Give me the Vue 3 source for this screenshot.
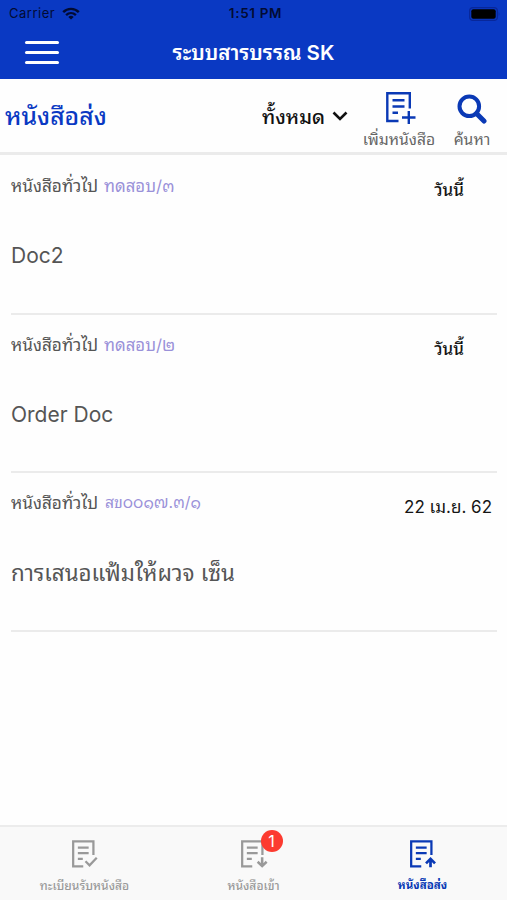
<template>
  <div class="screen">
    <header class="app-header">
      <div class="status-bar">
        <div class="carrier">
          <span class="carrier-name">Carrier</span>
          <svg class="wifi" viewBox="0 0 18 13" fill="none" stroke="#020b33" stroke-width="2.4">
            <path d="M1.2 5.2C5.6 .8 12.4 .8 16.8 5.2" />
            <path d="M4.1 8.1C7 5.4 11 5.4 13.9 8.1" />
            <path d="M6.3 9.9Q9 7.8 11.7 9.9L9 12.6Z" fill="#020b33" stroke="none" />
          </svg>
        </div>
        <span class="clock">1:51 PM</span>
        <svg class="battery" viewBox="0 0 32 14">
          <rect x=".6" y=".6" width="27.8" height="12.8" rx="3.5" fill="none" stroke="#08279a" stroke-width="1.2" />
          <rect x="2.3" y="2.3" width="24.4" height="9.4" rx="2" fill="#000" />
          <path d="M29.7 4.8Q31.3 7 29.7 9.2Z" fill="#08279a" />
        </svg>
      </div>
      <div class="nav-bar">
        <button class="menu-button"><i></i><i></i><i></i></button>
        <h1 class="app-title">ระบบสารบรรณ SK</h1>
      </div>
    </header>

    <div class="toolbar">
      <h2 class="page-title">หนังสือส่ง</h2>
      <button class="filter">
        <span class="filter-label">ทั้งหมด</span>
        <svg class="chevron" viewBox="0 0 16 10" fill="none" stroke="#111" stroke-width="2.6">
          <path d="M1.5 1.5L8 8L14.5 1.5" />
        </svg>
      </button>
      <button class="action add">
        <svg class="doc-icon" viewBox="0 0 30 33" fill="none" stroke="currentColor" stroke-width="2.4">
          <path :d="docPath" />
          <path d="M16 25.5H29.5M22.8 19V32" />
        </svg>
        <span>เพิ่มหนังสือ</span>
      </button>
      <button class="action search">
        <svg class="search-icon" viewBox="0 0 30 30" fill="none" stroke="currentColor">
          <circle cx="12.3" cy="12.3" r="9.8" stroke-width="4" />
          <path d="M19.5 19.5L27 27" stroke-width="5" stroke-linecap="round" />
        </svg>
        <span>ค้นหา</span>
      </button>
    </div>

    <main class="doc-list">
      <article v-for="doc in docs" :key="doc.number" class="doc-row">
        <div class="doc-meta">
          <span class="doc-type">{{ doc.type }}</span>
          <span :class="['doc-number', { long: doc.thai }]">{{ doc.number }}</span>
          <span :class="['doc-date', { today: doc.today }]">{{ doc.date }}</span>
        </div>
        <p :class="['doc-title', { thai: doc.thai }]">{{ doc.title }}</p>
      </article>
    </main>

    <nav class="tab-bar">
      <button v-for="tab in tabs" :key="tab.id" :class="['tab-item', tab.id, { active: activeTab === tab.id }]" @click="activeTab = tab.id">
        <span class="tab-icon">
          <svg class="doc-icon" viewBox="0 0 30 33" fill="none" stroke="currentColor" stroke-width="2.5">
            <path :d="docPath" />
            <path :d="tab.mark" :stroke-width="tab.markWidth" />
          </svg>
          <span v-if="tab.badge" class="badge">{{ tab.badge }}</span>
        </span>
        <span class="tab-label">{{ tab.label }}</span>
      </button>
    </nav>
  </div>
</template>

<script setup>
import { ref } from 'vue';

const docPath = 'M12.5 29H1.3V1.3H23.8V16.5M6.5 8.2H18.5M6.5 14.5H18.5M6.5 20.8H12';

const docs = [
  { type: 'หนังสือทั่วไป', number: 'ทดสอบ/๓', date: 'วันนี้', today: true, title: 'Doc2' },
  { type: 'หนังสือทั่วไป', number: 'ทดสอบ/๒', date: 'วันนี้', today: true, title: 'Order Doc' },
  { type: 'หนังสือทั่วไป', number: 'สข๐๐๑๗.๓/๑', date: '22 เม.ย. 62', title: 'การเสนอแฟ้มให้ผวจ เซ็น', thai: true },
];

const tabs = [
  { id: 'register', label: 'ทะเบียนรับหนังสือ', mark: 'M15 23.5L19.5 28L27.5 19.5', markWidth: 2.5 },
  { id: 'inbox', label: 'หนังสือเข้า', mark: 'M23.5 19V28.5M18.5 24L23.5 28.8L28.5 24', markWidth: 2.8, badge: 1 },
  { id: 'outbox', label: 'หนังสือส่ง', mark: 'M22.8 30V21M17.8 25.8L22.8 20.8L27.8 25.8', markWidth: 3 },
];

const activeTab = ref('outbox');
</script>

<style>
body {
  margin: 0;
  background: #fff;
}
</style>

<style scoped>
.screen {
  display: flex;
  flex-direction: column;
  height: 900px;
  overflow: hidden;
  background: #fefefe;
  font-family: Inter, "Noto Sans Thai Looped", Loma, Garuda, Waree, Umpush, "Noto Serif Thai", "Noto Sans", sans-serif;
}

button {
  padding: 0;
  border: none;
  background: none;
  font-family: inherit;
  color: inherit;
}

h1,
h2,
p {
  margin: 0;
}

svg {
  display: block;
  flex: none;
}

span,
h1,
h2,
p {
  white-space: nowrap;
}

.app-header {
  flex: none;
  height: 79px;
  background: #0a39c3;
}

.status-bar {
  display: grid;
  grid-template-columns: 1fr auto 1fr;
  align-items: center;
  height: 27px;
  padding: 0 6px 0 9px;
  color: #020b33;
  font-size: 13px;
  line-height: 27px;
}

.carrier {
  display: flex;
  align-items: center;
  gap: 7px;
}

.carrier-name {
  letter-spacing: 0.5px;
}

.wifi {
  width: 18px;
  height: 13px;
}

.clock {
  padding-left: 1px;
  font-weight: 600;
  font-size: 13.5px;
  letter-spacing: 0.65px;
}

.battery {
  justify-self: end;
  width: 32px;
  height: 14px;
}

.nav-bar {
  display: grid;
  grid-template-columns: 60px 1fr 60px;
  align-items: center;
  height: 50px;
}

.menu-button {
  display: flex;
  flex-direction: column;
  gap: 7px;
  padding-left: 25px;
}

.menu-button i {
  width: 34px;
  height: 3px;
  border-radius: 2px;
  background: #fff;
}

.app-title {
  text-align: center;
  color: #fff;
  font-size: 20.5px;
  font-weight: 600;
  line-height: 51px;
}

.toolbar {
  display: flex;
  flex: none;
  height: 73px;
  border-bottom: 3px solid #ebebeb;
}

.page-title {
  width: 261px;
  padding-left: 5px;
  box-sizing: border-box;
  color: #0a39c3;
  font-size: 24.7px;
  font-weight: 500;
  line-height: 74px;
}

.filter {
  display: flex;
  align-items: center;
  gap: 7px;
  width: 98px;
  padding-left: 1px;
  box-sizing: border-box;
  color: #111;
  font-size: 20px;
  font-weight: 500;
}

.filter-label {
  padding-bottom: 2px;
}

.chevron {
  width: 16px;
  height: 10px;
}

.action {
  display: flex;
  flex-direction: column;
  align-items: center;
  color: #0a39b5;
}

.action span {
  color: #666;
  font-size: 15.7px;
  line-height: 24px;
}

.add {
  width: 80px;
  padding-top: 13px;
}

.add .doc-icon {
  width: 30px;
  height: 33px;
  margin: 0 0 3px 3px;
}

.search {
  width: 66px;
  padding-top: 15px;
}

.search-icon {
  width: 30px;
  height: 30px;
  margin-bottom: 4px;
}

.doc-list {
  flex: 1;
  padding: 1px 10px 0 11px;
}

.doc-row {
  height: 158.5px;
  box-sizing: border-box;
  padding-top: 15px;
  border-bottom: 2px solid #ebebeb;
}

.doc-meta {
  display: flex;
  height: 30px;
  font-size: 17.2px;
  line-height: 30px;
}

.doc-type {
  width: 93px;
  color: #555;
}

.doc-number {
  color: #9a91d9;
  font-size: 16.8px;
}

.doc-number.long {
  padding-left: 1px;
  font-size: 15.8px;
}

.doc-date {
  margin-left: auto;
  margin-right: 5px;
  padding-top: 4px;
  color: #151515;
  font-size: 17px;
}

.doc-date.today {
  margin-right: 33px;
  font-weight: 500;
}

.doc-title {
  margin-top: 39px;
  color: #555;
  font-size: 21px;
  line-height: 32px;
}

.doc-title.thai {
  font-size: 22.3px;
}

.tab-bar {
  display: grid;
  flex: none;
  grid-template-columns: repeat(3, 1fr);
  height: 75px;
  box-sizing: border-box;
  border-top: 2px solid #ececec;
  background: #f9f9f9;
}

.tab-item {
  display: flex;
  flex-direction: column;
  align-items: center;
  padding-top: 13px;
  color: #999;
}

.tab-icon {
  position: relative;
  padding-left: 1px;
}

.tab-icon .doc-icon {
  width: 27px;
  height: 30px;
}

.badge {
  position: absolute;
  top: -10px;
  left: 21px;
  width: 22px;
  height: 22px;
  border-radius: 50%;
  background: #fc3b30;
  color: #fff;
  font-size: 16px;
  line-height: 22px;
  text-align: center;
}

.tab-label {
  font-size: 12px;
  font-weight: 500;
  line-height: 31px;
}

.active {
  color: #0a39b5;
}

.active .tab-label {
  font-size: 11.6px;
  font-weight: 700;
}
</style>
